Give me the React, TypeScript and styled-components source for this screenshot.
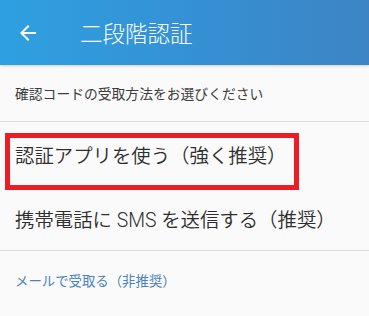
import React from "react";
import styled, { createGlobalStyle } from "styled-components";

const Global = createGlobalStyle`
  html, body { margin: 0; padding: 0; background: #fafafa; }
  body { font-family: Roboto, "Noto Sans CJK JP", sans-serif; }
`;

const Page = styled.div`
  width: 369px;
  height: 316px;
  background: #fafafa;
  overflow: hidden;
  display: flex;
  flex-direction: column;
`;

const AppBar = styled.header`
  height: 65px;
  flex: none;
  display: flex;
  align-items: center;
  padding-left: 16px;
  gap: 40px;
  background: linear-gradient(90deg, #2ea0e1 0%, #3590d3 55%, #3d84c4 100%);
  box-shadow: 0 1px 3px rgba(0, 0, 0, 0.18);
  position: relative;
  z-index: 1;
`;

const Title = styled.h1`
  margin: 0;
  font-size: 22.5px;
  font-weight: 300;
  color: #ffffff;
  line-height: 1;
  padding-top: 3px;
`;

const Caption = styled.div`
  height: 56px;
  flex: none;
  display: flex;
  align-items: center;
  padding-left: 15px;
  font-size: 13.8px;
  font-weight: 400;
  color: #3c3c3c;
  border-bottom: 1px solid #dcdcdc;
`;

const Options = styled.div`
  position: relative;
  border-bottom: 1px solid #dcdcdc;
`;

const Option = styled.div`
  height: 64px;
  display: flex;
  align-items: center;
  padding-left: 15px;
  font-size: 19.4px;
  font-weight: 350;
  color: #2e2e2e;
`;

const Highlight = styled.div`
  position: absolute;
  left: 5px;
  top: 11px;
  width: 284px;
  height: 47px;
  border: 5px solid #ee1c25;
  pointer-events: none;
`;

const MailLink = styled.a`
  height: 58px;
  display: flex;
  align-items: center;
  padding-left: 15px;
  font-size: 13.4px;
  font-weight: 400;
  color: #4a82bd;
  text-decoration: none;
`;

export default function App() {
  return (
    <Page>
      <Global />
      <AppBar>
        <svg width="24" height="24" viewBox="0 0 24 24" aria-hidden>
          <path
            d="M20 11H7.83l5.59-5.59L12 4l-8 8 8 8 1.41-1.41L7.83 13H20v-2z"
            fill="#fff"
          />
        </svg>
        <Title>二段階認証</Title>
      </AppBar>
      <Caption>確認コードの受取方法をお選びください</Caption>
      <Options>
        <Option>認証アプリを使う（強く推奨）</Option>
        <Option>携帯電話に SMS を送信する（推奨）</Option>
        <Highlight />
      </Options>
      <MailLink>メールで受取る（非推奨）</MailLink>
    </Page>
  );
}
